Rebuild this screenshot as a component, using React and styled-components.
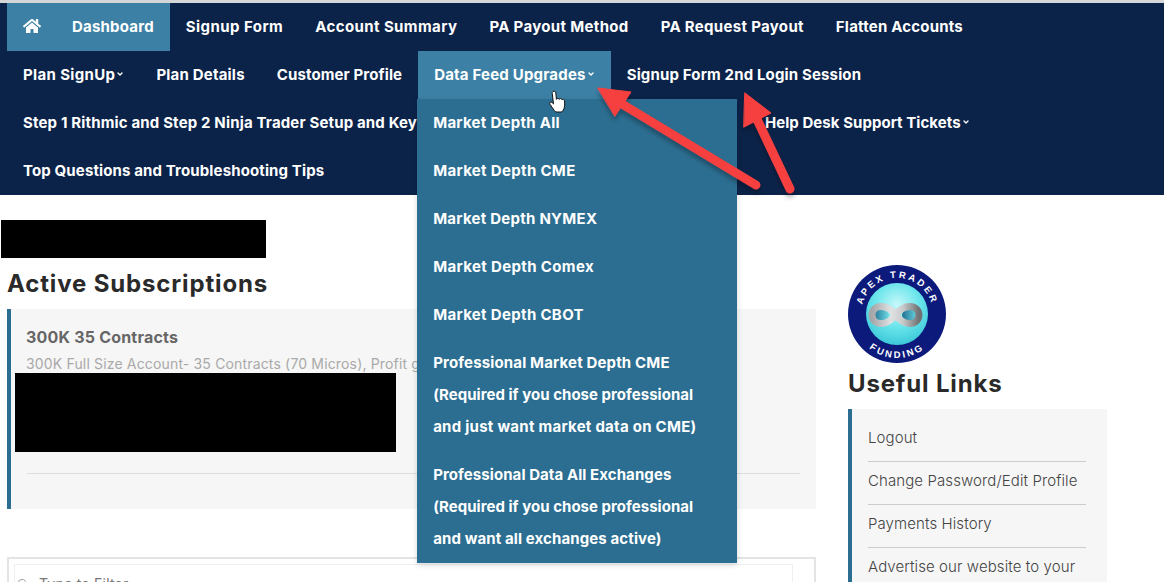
import styled, { createGlobalStyle } from "styled-components";
import { FaHome } from "react-icons/fa";
import { ChevronDown, Search } from "lucide-react";

const GlobalStyle = createGlobalStyle`
  html, body {
    margin: 0;
    height: 582px;
    overflow: hidden;
    background: #ffffff;
    font-family: "Inter", "Liberation Sans", sans-serif;
  }
`;

// second value is the letter-spacing that brings the line to its width in the design
const dropdownItems = [
  [["Market Depth All", 0.27]],
  [["Market Depth CME", 0.33]],
  [["Market Depth NYMEX", 0.25]],
  [["Market Depth Comex", 0.36]],
  [["Market Depth CBOT", 0.33]],
  [
    ["Professional Market Depth CME", 0.15],
    ["(Required if you chose professional", 0.03],
    ["and just want market data on CME)", 0.26],
  ],
  [
    ["Professional Data All Exchanges", 0.08],
    ["(Required if you chose professional", 0.03],
    ["and want all exchanges active)", 0.11],
  ],
];

const usefulLinks = [
  "Logout",
  "Change Password/Edit Profile",
  "Payments History",
  "Advertise our website to your",
];

const Page = () => {
  return (
    <>
      <GlobalStyle />
      <Wrapper>
        <TopLine />
        <NavBar>
          <NavRow>
            <NavItem $active $track={0.2}>
              <HomeIcon>
                <FaHome size={18} />
              </HomeIcon>
              Dashboard
            </NavItem>
            <NavItem $track={0.44}>Signup Form</NavItem>
            <NavItem $track={0.41}>Account Summary</NavItem>
            <NavItem $track={0.33}>PA Payout Method</NavItem>
            <NavItem $track={0.32}>PA Request Payout</NavItem>
            <NavItem $track={0.2}>Flatten Accounts</NavItem>
          </NavRow>
          <NavRow>
            <NavItem $track={0.35}>
              Plan SignUp
              <ChevronDown size={8} strokeWidth={4} />
            </NavItem>
            <NavItem $track={0.2}>Plan Details</NavItem>
            <NavItem $track={0.12}>Customer Profile</NavItem>
            <DropdownHolder>
              <NavItem $active $track={0.2}>
                Data Feed Upgrades
                <ChevronDown size={8} strokeWidth={4} />
              </NavItem>
              <Dropdown>
                {dropdownItems.map((lines) => (
                  <DropdownItem key={lines[0][0]}>
                    {lines.map(([text, track]) => (
                      <DropdownLine key={text} $track={track}>
                        {text}
                      </DropdownLine>
                    ))}
                  </DropdownItem>
                ))}
              </Dropdown>
            </DropdownHolder>
            <NavItem $track={0.15}>Signup Form 2nd Login Session</NavItem>
          </NavRow>
          <NavRow>
            <NavItem $width={742} $track={0.16}>
              Step 1 Rithmic and Step 2 Ninja Trader Setup and Key
            </NavItem>
            <NavItem $track={0.05}>
              Help Desk Support Tickets
              <ChevronDown size={8} strokeWidth={4} />
            </NavItem>
          </NavRow>
          <NavRow>
            <NavItem $track={0.13}>Top Questions and Troubleshooting Tips</NavItem>
          </NavRow>
        </NavBar>

        <Content>
          <MainColumn>
            <RedactedName />
            <Heading>Active Subscriptions</Heading>
            <PlanCard>
              <PlanTitle>300K 35 Contracts</PlanTitle>
              <PlanText>
                300K Full Size Account- 35 Contracts (70 Micros), Profit goal
              </PlanText>
              <RedactedDetails />
              <PlanDivider />
            </PlanCard>
            <FilterBox>
              <FilterInput>
                <Search size={11} color="#999999" />
                Type to Filter
              </FilterInput>
            </FilterBox>
          </MainColumn>

          <SideColumn>
            <Logo />
            <SideHeading>Useful Links</SideHeading>
            <LinksPanel>
              {usefulLinks.map((link) => (
                <LinkRow key={link}>{link}</LinkRow>
              ))}
            </LinksPanel>
          </SideColumn>
        </Content>

        <Annotations />
      </Wrapper>
    </>
  );
};

const Logo = () => (
  <LogoSvg viewBox="0 0 98 98">
    <defs>
      <radialGradient id="ball" cx="50%" cy="35%" r="70%">
        <stop offset="0%" stopColor="#c8f8fa" />
        <stop offset="50%" stopColor="#6ce6ec" />
        <stop offset="100%" stopColor="#35c4d6" />
      </radialGradient>
      <linearGradient id="hole" x1="0" x2="1" y1="0" y2="0">
        <stop offset="0%" stopColor="#1f6f92" />
        <stop offset="100%" stopColor="#6fdbe4" />
      </linearGradient>
      <linearGradient id="loop" x1="0" x2="1" y1="0" y2="0">
        <stop offset="0%" stopColor="#a4a6a8" />
        <stop offset="40%" stopColor="#dfe1e2" />
        <stop offset="65%" stopColor="#c9cbcc" />
        <stop offset="100%" stopColor="#6f7174" />
      </linearGradient>
      <path id="topArc" d="M 13 49 A 36 36 0 0 1 85 49" />
      <path id="bottomArc" d="M 5 49 A 44 44 0 0 0 93 49" />
    </defs>
    <circle cx="49" cy="49" r="49" fill="#0c1a7c" />
    <circle cx="49" cy="49" r="31" fill="url(#ball)" />
    <ellipse cx="33" cy="50" rx="8" ry="6" fill="url(#hole)" />
    <ellipse cx="62" cy="50" rx="8" ry="6" fill="url(#hole)" />
    <path
      d="M47.500 50C43 44 38 41.500 33 41.500C27 41.500 24 46 24 50C24 54 27 58.500 33 58.500C38 58.500 43 56 47.500 50C52 44 57 41.500 62 41.500C68 41.500 71 46 71 50C71 54 68 58.500 62 58.500C57 58.500 52 56 47.500 50Z"
      fill="none"
      stroke="url(#loop)"
      strokeWidth="7"
    />
    <LogoText>
      <textPath href="#topArc" startOffset="50%" textAnchor="middle">
        APEX TRADER
      </textPath>
    </LogoText>
    <LogoText>
      <textPath href="#bottomArc" startOffset="50%" textAnchor="middle">
        FUNDING
      </textPath>
    </LogoText>
  </LogoSvg>
);

const Annotations = () => (
  <Overlay viewBox="0 0 1164 582">
    <defs>
      <filter id="arrowShadow" x="-20%" y="-20%" width="140%" height="140%">
        <feDropShadow dx="0" dy="4" stdDeviation="2.5" floodColor="#000" floodOpacity="0.3" />
      </filter>
    </defs>
    <g filter="url(#arrowShadow)" fill="#f64040" stroke="#f64040" strokeLinecap="round" strokeLinejoin="round">
      <line x1="756" y1="185" x2="622" y2="104" strokeWidth="9" />
      <polygon points="598,88 631,92 615,116" strokeWidth="1" />
      <line x1="790" y1="189" x2="755" y2="115" strokeWidth="9" />
      <polygon points="745,93 771,113 744,127" strokeWidth="1" />
    </g>
    <path
      d="M553 91.500c1.200-.8 2.600 0 2.800 1.300l.6 6.600c.3-1.300 2.500-1.500 2.900 0 .2-1.100 2.400-1.200 2.800.4.400-.8 2.200-.7 2.400 1 .3 3 .2 6-.6 8-.8 2-1.500 3-3 3.200h-4c-1.500 0-2.300-.9-3-2l-4-5.800c-.9-1.400 1-2.900 2.300-1.600l1.300 1.300-1.300-10.600c-.1-.5 0-1.100.8-1.800z"
      fill="#ffffff"
      stroke="#111111"
      strokeWidth="1"
      strokeLinejoin="round"
    />
  </Overlay>
);

const Wrapper = styled.div`
  position: relative;
  width: 1164px;
  height: 582px;
  overflow: hidden;
`;

const TopLine = styled.div`
  height: 3px;
  background-color: #d4d6d8;
`;

const NavBar = styled.nav`
  display: flex;
  flex-direction: column;
  padding-left: 7px;
  background-color: #0c2349;
`;

const NavRow = styled.div`
  display: flex;
  height: 48px;
`;

const NavItem = styled.div`
  display: flex;
  align-items: center;
  gap: 1px;
  box-sizing: border-box;
  height: 48px;
  width: ${(props) => (props.$width ? `${props.$width}px` : "auto")};
  padding: 0 16px 2px;
  color: #ffffff;
  font-size: 15px;
  font-weight: 700;
  letter-spacing: ${(props) => props.$track}px;
  white-space: nowrap;
  background-color: ${(props) => (props.$active ? "#3c81a5" : "transparent")};
`;

const HomeIcon = styled.span`
  display: flex;
  margin-right: 30px;
`;

const DropdownHolder = styled.div`
  position: relative;
  z-index: 2;
`;

const Dropdown = styled.div`
  position: absolute;
  top: 48px;
  left: -1px;
  width: 320px;
  height: 464px;
  background-color: #2c6e91;
  box-shadow: 0 2px 6px rgba(0, 0, 0, 0.15);
`;

const DropdownItem = styled.div`
  padding: 8px 16px;
  color: #ffffff;
  font-size: 15px;
  font-weight: 700;
  line-height: 32px;
  white-space: nowrap;
`;

const DropdownLine = styled.div`
  letter-spacing: ${(props) => props.$track}px;
`;

const Content = styled.div`
  display: flex;
  align-items: flex-start;
`;

const MainColumn = styled.div`
  width: 816px;
  flex: none;
`;

const RedactedName = styled.div`
  width: 265px;
  height: 38px;
  margin: 25px 0 0 1px;
  background-color: #000000;
`;

const Heading = styled.h2`
  margin: 10px 0 9px 7px;
  color: #2a2a2a;
  font-size: 24px;
  line-height: 32px;
  font-weight: 700;
  letter-spacing: 0.85px;
`;

const PlanCard = styled.div`
  position: relative;
  box-sizing: border-box;
  height: 200px;
  margin-left: 7px;
  padding: 18px 16px 0 15px;
  background-color: #f6f6f6;
  border-left: 4px solid #2c6e91;
`;

const PlanTitle = styled.div`
  color: #666666;
  font-size: 16px;
  line-height: 20px;
  font-weight: 700;
  letter-spacing: 0.2px;
`;

const PlanText = styled.div`
  margin-top: 7px;
  color: #a9a9a9;
  font-size: 14px;
  line-height: 20px;
  letter-spacing: 0.16px;
  white-space: nowrap;
`;

const RedactedDetails = styled.div`
  position: absolute;
  top: 64px;
  left: 4px;
  width: 381px;
  height: 79px;
  background-color: #000000;
`;

const PlanDivider = styled.div`
  height: 1px;
  margin: 99px 0 0 1px;
  background-color: #dddddd;
`;

const FilterBox = styled.div`
  box-sizing: border-box;
  height: 60px;
  margin: 48px 0 0 7px;
  padding: 5px 21px 0 5px;
  border: 2px solid #e4e4e4;
  border-bottom: none;
`;

const FilterInput = styled.div`
  display: flex;
  align-items: center;
  gap: 11px;
  height: 38px;
  padding: 0 0 0 2px;
  box-sizing: border-box;
  border: 1px solid #efefef;
  color: #777777;
  font-size: 14px;
  letter-spacing: 0.2px;
`;

const SideColumn = styled.div`
  width: 259px;
  margin-left: 32px;
  padding-top: 70px;
`;

const LogoSvg = styled.svg`
  display: block;
  width: 98px;
  height: 98px;
`;

const LogoText = styled.text`
  fill: #ffffff;
  font-family: "Liberation Sans", sans-serif;
  font-size: 9.500px;
  font-weight: 700;
  letter-spacing: 2.400px;
`;

const SideHeading = styled.h2`
  margin: 6px 0 10px;
  color: #2a2a2a;
  font-size: 24px;
  line-height: 30px;
  font-weight: 700;
  letter-spacing: 0.85px;
`;

const LinksPanel = styled.div`
  box-sizing: border-box;
  height: 180px;
  padding: 10px 21px 0 16px;
  background-color: #f6f6f6;
  border-left: 4px solid #2c6e91;
`;

const LinkRow = styled.div`
  height: 42px;
  border-bottom: 1px solid #cccccc;
  color: #444444;
  font-size: 15px;
  font-weight: 300;
  line-height: 38px;
  letter-spacing: 0.1px;
  white-space: nowrap;

  &:last-child {
    border-bottom: none;
  }
`;

const Overlay = styled.svg`
  position: absolute;
  top: 0;
  left: 0;
  width: 1164px;
  height: 582px;
  z-index: 3;
  pointer-events: none;
`;

export default Page;
